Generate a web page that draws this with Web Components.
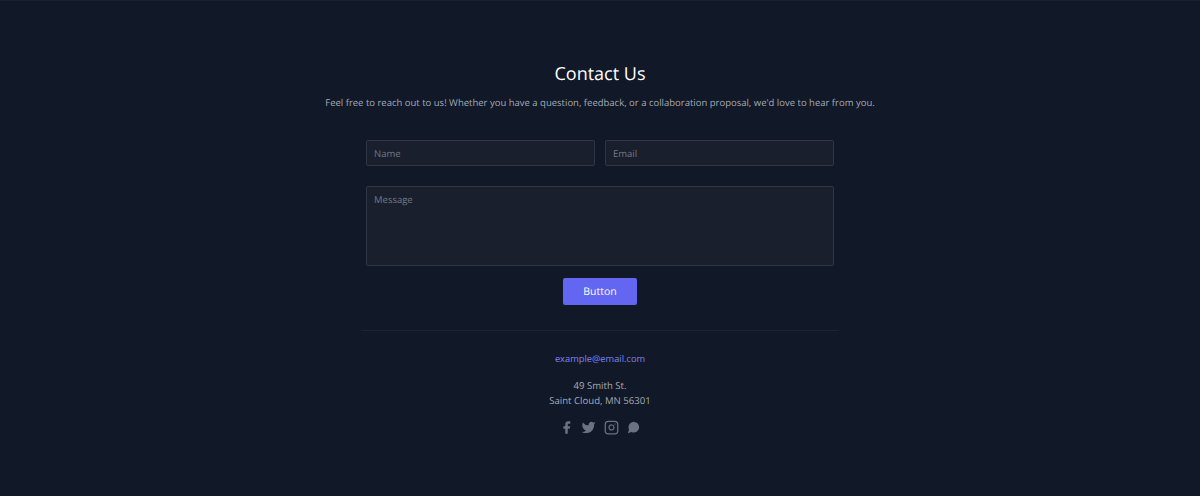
<!DOCTYPE html>
<html lang="en">
<head>
<meta charset="utf-8">
<title>Contact Us</title>
<style>
  html, body { margin: 0; height: 100%; background: #111827; }
  body { font-family: "Open Sans", "Noto Sans", sans-serif; text-rendering: geometricPrecision; }
</style>
</head>
<body>
<contact-section>
  <span slot="title">Contact Us</span>
  <span slot="lead">Feel free to reach out to us! Whether you have a question, feedback, or a collaboration proposal, we'd love to hear from you.</span>
  <contact-field slot="fields" name="name">Name</contact-field>
  <contact-field slot="fields" name="email" type="email">Email</contact-field>
  <contact-field slot="message" name="message" multiline>Message</contact-field>
  <contact-footer slot="footer"></contact-footer>
</contact-section>

<script>
// form field: the slotted text acts as the placeholder, hidden once something is typed
class ContactField extends HTMLElement {
  constructor() {
    super();
    this.attachShadow({ mode: "open" });
  }

  connectedCallback() {
    const multi = this.hasAttribute("multiline");
    const name = this.getAttribute("name") || "";
    const type = this.getAttribute("type") || "text";
    this.shadowRoot.innerHTML = `
      <style>
        :host { display: block; position: relative; height: 26px; }
        :host([multiline]) { height: 80px; }
        input, textarea { display: block; box-sizing: border-box; width: 100%; height: 100%; margin: 0; padding: 0 7px;
          background: #191f2c; border: 1px solid #2f3745; border-radius: 2px; outline: none; resize: none;
          font: 9.5px/16px "Open Sans", "Noto Sans", sans-serif; color: #f3f4f6; }
        textarea { padding: 6px 7px; }
        input:focus, textarea:focus { border-color: #6366f1; }
        label { position: absolute; left: 8px; top: 6px; font-size: 9.5px; line-height: 16px; color: #727987; pointer-events: none; }
        .filled + label { display: none; }
      </style>
      ${multi ? `<textarea id="f" name="${name}"></textarea>` : `<input id="f" name="${name}" type="${type}">`}
      <label for="f"><slot></slot></label>`;
    const f = this.shadowRoot.getElementById("f");
    f.addEventListener("input", () => f.classList.toggle("filled", f.value !== ""));
  }
}

class ContactFooter extends HTMLElement {
  constructor() {
    super();
    this.attachShadow({ mode: "open" });
    this.shadowRoot.innerHTML = `
      <style>
        :host { display: flex; flex-direction: column; align-items: center; font-size: 9.6px; line-height: 15px; color: #a3aab6; }
        a { color: #7f84f0; text-decoration: none; font-size: 9.3px; }
        p { margin: 12px 0 0; text-align: center; }
        .social { display: flex; gap: 7.5px; margin-top: 12px; color: #6b7280; }
        .social a { display: flex; width: 15px; height: 15px; color: inherit; }
        svg { width: 15px; height: 15px; }
      </style>
      <a href="#">example@email.com</a>
      <p>49 Smith St.<br>Saint Cloud, MN 56301</p>
      <div class="social">
        <a href="#" aria-label="Facebook"><svg viewBox="0 0 24 24" fill="currentColor"><path d="M18 2h-3a5 5 0 0 0-5 5v3H7v4h3v8h4v-8h3l1-4h-4V7a1 1 0 0 1 1-1h3z"/></svg></a>
        <a href="#" aria-label="Twitter"><svg viewBox="0 0 24 24" fill="currentColor"><path d="M23 3a10.900 10.900 0 0 1-3 1.530 4.480 4.480 0 0 0-7.860 3v1A10.660 10.660 0 0 1 3 4s-4 9 5 13a11.640 11.640 0 0 1-7 2c9 5 20 0 20-11.500a4.500 4.500 0 0 0-.080-.830A7.720 7.720 0 0 0 23 3z"/></svg></a>
        <a href="#" aria-label="Instagram"><svg viewBox="0 0 24 24" fill="none" stroke="currentColor" stroke-width="2" stroke-linecap="round" stroke-linejoin="round"><rect x="2" y="2" width="20" height="20" rx="5"/><path d="M16 11.370A4 4 0 1 1 12.630 8 4 4 0 0 1 16 11.370z"/><path d="M17.500 6.500h.010"/></svg></a>
        <a href="#" aria-label="Chat"><svg viewBox="0 0 24 24" fill="currentColor"><path d="M21 11.500a8.380 8.380 0 0 1-.900 3.800 8.500 8.500 0 0 1-7.600 4.700 8.380 8.380 0 0 1-3.800-.900L3 21l1.900-5.700a8.380 8.380 0 0 1-.900-3.800 8.500 8.500 0 0 1 4.700-7.600 8.380 8.380 0 0 1 3.800-.900h.500a8.480 8.480 0 0 1 8 8v.500z"/></svg></a>
      </div>`;
  }
}

class ContactSection extends HTMLElement {
  constructor() {
    super();
    this.attachShadow({ mode: "open" });
    this.shadowRoot.innerHTML = `
      <style>
        :host { display: block; box-sizing: border-box; height: 496px; padding-top: 60px; background: #111827; border-top: 1px solid #1b2029; }
        header { text-align: center; }
        h1 { margin: 0; font-size: 18px; line-height: 26px; font-weight: 400; color: #fff; }
        .lead { margin: 8px 0 0; font-size: 9.5px; line-height: 16px; color: #a3aab6; }
        .form { width: 468px; margin: 29px auto 0; display: flex; flex-direction: column; }
        .fields { display: grid; grid-template-columns: 1fr 1fr; gap: 10px; }
        .message { margin-top: 20px; }
        button { align-self: center; width: 74px; height: 27px; margin-top: 12px; padding: 0; border: 0; border-radius: 2px;
          background: #6366f1; color: #fff; font: 10.5px "Open Sans", "Noto Sans", sans-serif; text-rendering: geometricPrecision; cursor: pointer; }
        hr { width: 478px; height: 1px; margin: 25px auto 0; border: 0; background: #1d2431; }
        .footer { margin-top: 20px; }
      </style>
      <header>
        <h1><slot name="title"></slot></h1>
        <p class="lead"><slot name="lead"></slot></p>
      </header>
      <div class="form">
        <div class="fields"><slot name="fields"></slot></div>
        <div class="message"><slot name="message"></slot></div>
        <button type="button">Button</button>
      </div>
      <hr>
      <div class="footer"><slot name="footer"></slot></div>`;
  }
}

customElements.define("contact-field", ContactField);
customElements.define("contact-footer", ContactFooter);
customElements.define("contact-section", ContactSection);
</script>
</body>
</html>
